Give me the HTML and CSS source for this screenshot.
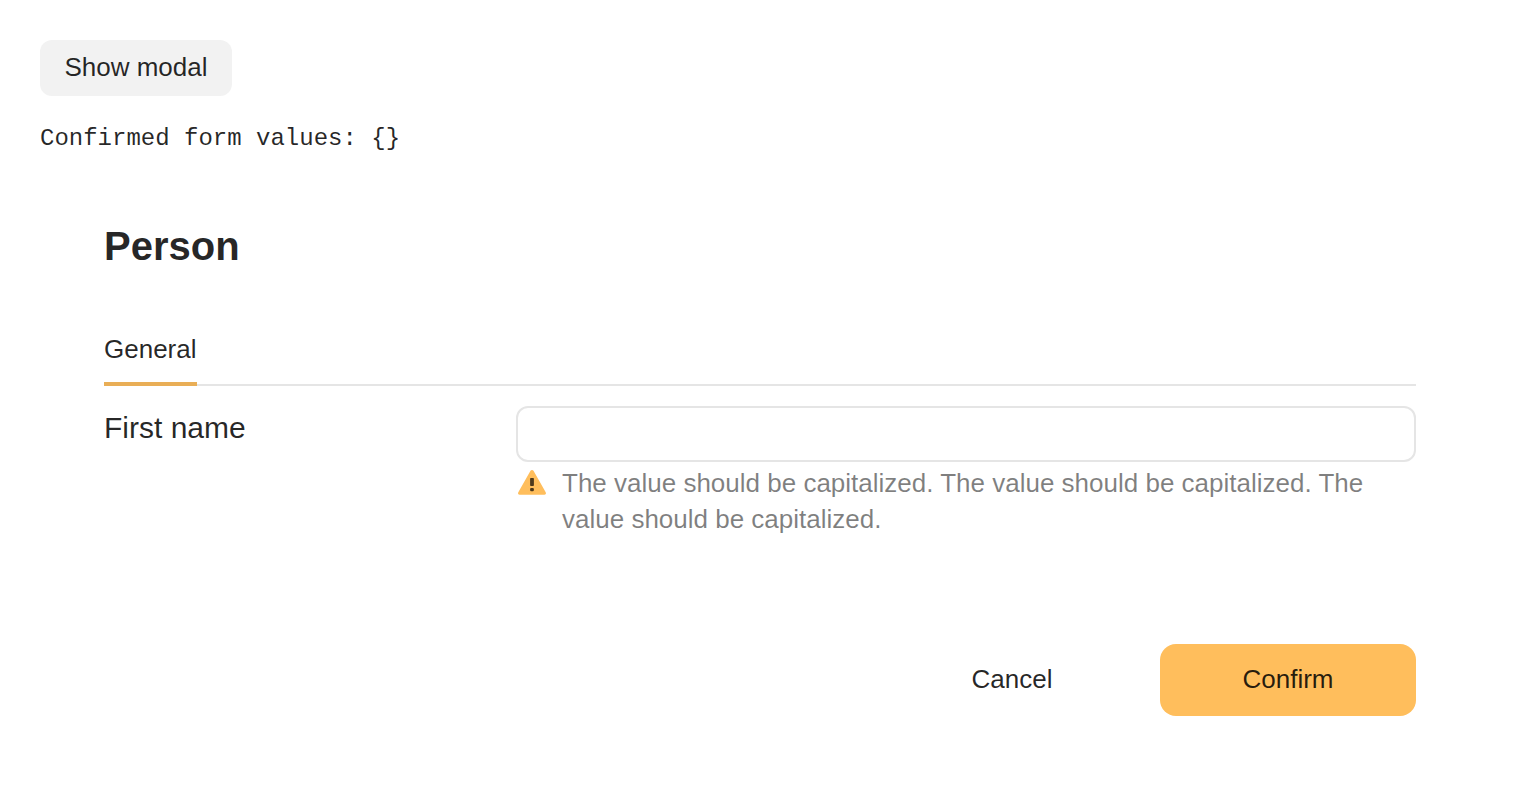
FILE: index.html
```html
<!DOCTYPE html>
<html lang="en">
<head>
<meta charset="utf-8">
<title>Person</title>
<link rel="stylesheet" href="styles.css">
</head>
<body>
<main class="page">
  <button class="button button-normal" type="button">Show modal</button>
  <pre class="values">Confirmed form values: {}</pre>
  <form class="dialog">
    <h1 class="title">Person</h1>
    <div class="tabs" role="tablist">
      <button class="tab" type="button" role="tab" aria-selected="true">General</button>
    </div>
    <div class="row">
      <label class="label" for="first-name">First name</label>
      <div class="field">
        <input class="input" id="first-name" type="text" aria-describedby="first-name-hint">
        <div class="hint">
          <svg class="hint-icon" viewBox="0 0 32 32" aria-hidden="true">
            <path d="M14.5 3.8c.7-1.1 2.3-1.1 3 0l12.2 21.4c.7 1.2 0 2.5-1.4 2.5H3.7c-1.4 0-2.1-1.3-1.4-2.5z" fill="#ffbe5c"/>
            <rect x="14.1" y="11" width="3.8" height="8" rx="0.8" fill="#4d391c"/>
            <rect x="14.1" y="20.9" width="3.8" height="3.3" rx="1.2" fill="#4d391c"/>
          </svg>
          <p class="hint-text" id="first-name-hint">The value should be capitalized. The value should be capitalized. The value should be capitalized.</p>
        </div>
      </div>
    </div>
    <footer class="footer">
      <button class="button button-flat" type="button">Cancel</button>
      <button class="button button-action" type="button">Confirm</button>
    </footer>
  </form>
</main>
</body>
</html>
```

FILE: styles.css
```css
* {
  box-sizing: border-box;
}

body {
  margin: 0;
  background: #fff;
  color: rgba(0, 0, 0, 0.85);
  font: 26px/36px "Liberation Sans", Arial, sans-serif;
}

.page {
  padding: 40px;
}

.button {
  border: 0;
  padding: 0 24px 2px;
  color: inherit;
  font: inherit;
  cursor: pointer;
}

.button-normal {
  display: block;
  min-width: 192px;
  height: 56px;
  border-radius: 12px;
  background: #f2f2f2;
}

.values {
  margin: 24px 0 0;
  font: 24px/38px "Liberation Mono", "Courier New", monospace;
}

.dialog {
  padding: 60px 64px 56px;
}

.title {
  margin: 0;
  font-size: 40px;
  line-height: 56px;
}

.tabs {
  display: flex;
  margin-top: 40px;
  box-shadow: inset 0 -2px #e5e5e5;
}

.tab {
  height: 72px;
  padding: 2px 0 0;
  border: 0;
  border-bottom: 4px solid #e9ae56;
  background: none;
  color: inherit;
  font: inherit;
}

.row {
  display: flex;
  gap: 32px;
  margin-top: 20px;
}

.label {
  flex: 0 0 380px;
  padding-top: 4px;
  font-size: 30px;
}

.field {
  flex: 1;
  min-width: 0;
}

.input {
  display: block;
  width: 100%;
  height: 56px;
  padding: 0 16px;
  border: 2px solid #e5e5e5;
  border-radius: 12px;
  background: #fff;
  color: inherit;
  font: inherit;
}

.hint {
  display: flex;
  align-items: flex-start;
  gap: 14px;
  margin-top: 3px;
  color: rgba(0, 0, 0, 0.5);
}

.hint-icon {
  flex: none;
  width: 32px;
  height: 32px;
  margin-top: 2px;
}

.hint-text {
  margin: 0;
}

.footer {
  display: flex;
  justify-content: flex-end;
  gap: 20px;
  margin-top: 107px;
}

.button-flat,
.button-action {
  width: 256px;
  height: 72px;
  border-radius: 16px;
}

.button-flat {
  background: none;
}

.button-action {
  background: #ffbe5c;
}
```
